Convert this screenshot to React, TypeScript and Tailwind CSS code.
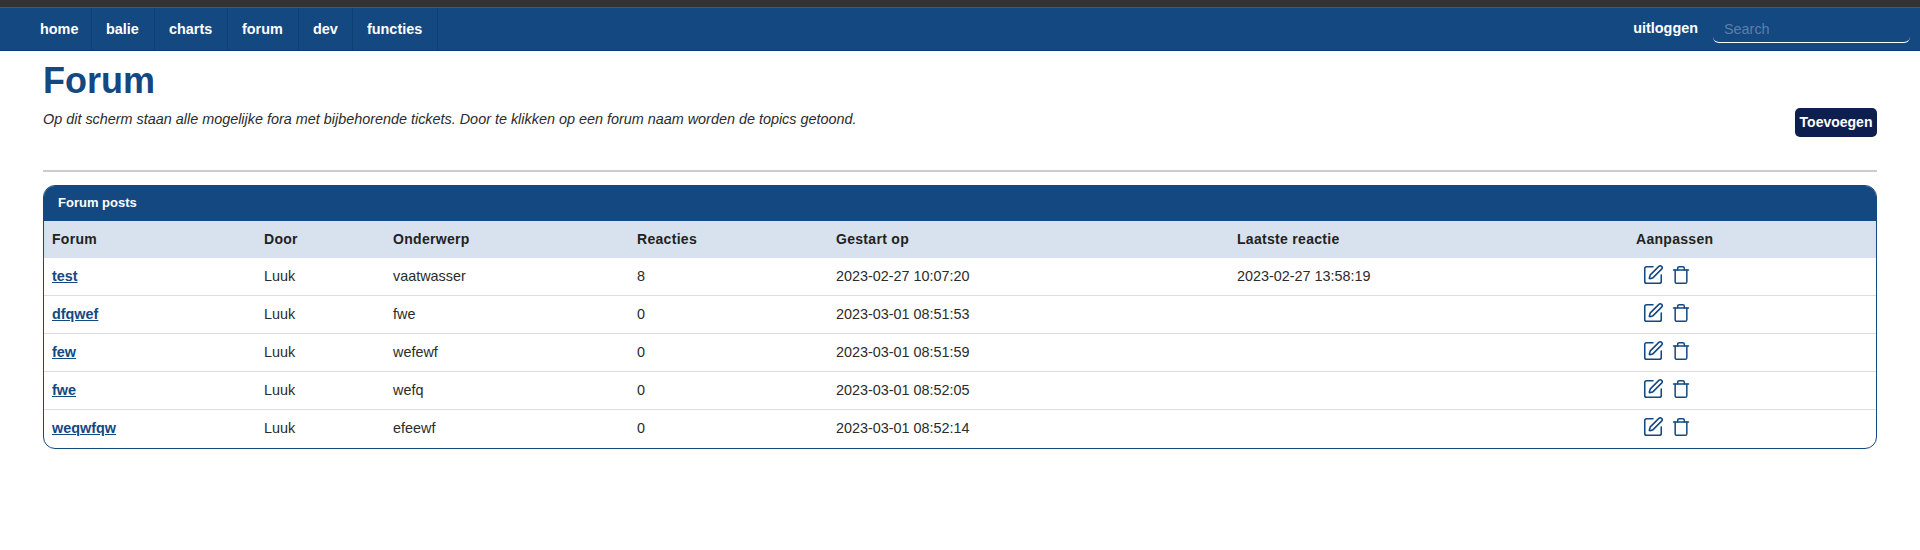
import { SquarePen, Trash } from "lucide-react";

const NAV = [
  { label: "home", width: "w-[66px]" },
  { label: "balie", width: "w-[63px]" },
  { label: "charts", width: "w-[73px]" },
  { label: "forum", width: "w-[71px]" },
  { label: "dev", width: "w-[54px]" },
  { label: "functies", width: "w-[85px]" },
];

const POSTS = [
  { forum: "test", door: "Luuk", onderwerp: "vaatwasser", reacties: 8, gestart: "2023-02-27 10:07:20", laatste: "2023-02-27 13:58:19" },
  { forum: "dfqwef", door: "Luuk", onderwerp: "fwe", reacties: 0, gestart: "2023-03-01 08:51:53", laatste: "" },
  { forum: "few", door: "Luuk", onderwerp: "wefewf", reacties: 0, gestart: "2023-03-01 08:51:59", laatste: "" },
  { forum: "fwe", door: "Luuk", onderwerp: "wefq", reacties: 0, gestart: "2023-03-01 08:52:05", laatste: "" },
  { forum: "weqwfqw", door: "Luuk", onderwerp: "efeewf", reacties: 0, gestart: "2023-03-01 08:52:14", laatste: "" },
];

export default function App() {
  return (
    <div className="min-h-[550px] bg-white font-['Liberation_Sans',Arial,sans-serif] text-[#2b2b2b]">
      <div className="h-2 bg-[#333] border-b border-[#555]" />

      <nav className="flex h-[43px] items-stretch justify-between bg-[#144880] pl-[26px] pr-[10px] border-b border-[#0f3c70]">
        <ul className="flex items-stretch">
          {NAV.map((item) => (
            <li key={item.label} className={`${item.width} flex items-center pl-[14px] pt-[1px] border-r border-[#0f3f75] text-[14.4px] font-bold text-white`}>
              {item.label}
            </li>
          ))}
        </ul>
        <div className="flex items-center">
          <span className="mr-[15px] text-[14.4px] font-bold text-white">uitloggen</span>
          <input
            placeholder="Search"
            className="h-[28px] w-[197px] rounded-b-[6px] border-b border-white bg-transparent px-[11px] text-[14.4px] text-white outline-none placeholder:text-[#5c7fa8]"
          />
        </div>
      </nav>

      <main className="px-[43px]">
        <h1 className="mt-[8px] text-[36px] leading-[44px] font-bold text-[#144880]">Forum</h1>
        <div className="flex items-start justify-between">
          <p className="mt-[8px] text-[14.4px] leading-[17px] italic">
            Op dit scherm staan alle mogelijke fora met bijbehorende tickets. Door te klikken op een forum naam worden de topics getoond.
          </p>
          <button className="mt-[5px] h-[29px] w-[82px] rounded-[5px] bg-[#0d1f4f] text-[14px] font-bold text-white">
            Toevoegen
          </button>
        </div>
        <hr className="mt-[33px] border-t-2 border-[#ccc]" />

        <section className="mt-[13px] overflow-hidden rounded-[12px] border border-[#144880]">
          <div className="flex h-[35px] items-center bg-[#144880] pb-[1px] pl-[14px] text-[13px] font-bold text-white">Forum posts</div>
          <table className="w-full table-fixed border-separate border-spacing-0 text-[14.4px]">
            <colgroup>
              <col className="w-[212px]" />
              <col className="w-[129px]" />
              <col className="w-[244px]" />
              <col className="w-[199px]" />
              <col className="w-[401px]" />
              <col className="w-[399px]" />
              <col />
            </colgroup>
            <thead>
              <tr className="h-[37px] bg-[#d8e2ef] text-left">
                {["Forum", "Door", "Onderwerp", "Reacties", "Gestart op", "Laatste reactie", "Aanpassen"].map((title) => (
                  <th key={title} className="px-[8px] pb-[1px] text-[14px] font-bold tracking-[0.3px] text-[#222]">{title}</th>
                ))}
              </tr>
            </thead>
            <tbody>
              {POSTS.map((post, i) => {
                const cell = i < POSTS.length - 1 ? "px-[8px] border-b border-[#ddd]" : "px-[8px]";
                return (
                  <tr key={post.forum} className="h-[38px]">
                    <td className={cell}>
                      <a className="font-bold text-[#144880] underline">{post.forum}</a>
                    </td>
                    <td className={cell}>{post.door}</td>
                    <td className={cell}>{post.onderwerp}</td>
                    <td className={cell}>{post.reacties}</td>
                    <td className={cell}>{post.gestart}</td>
                    <td className={cell}>{post.laatste}</td>
                    <td className={cell}>
                      <div className="flex items-center gap-[7px] pb-[4px] pl-[6px] text-[#144880]">
                        <SquarePen size={22} strokeWidth={1.7} />
                        <Trash size={20} strokeWidth={1.8} />
                      </div>
                    </td>
                  </tr>
                );
              })}
            </tbody>
          </table>
        </section>
      </main>
    </div>
  );
}
